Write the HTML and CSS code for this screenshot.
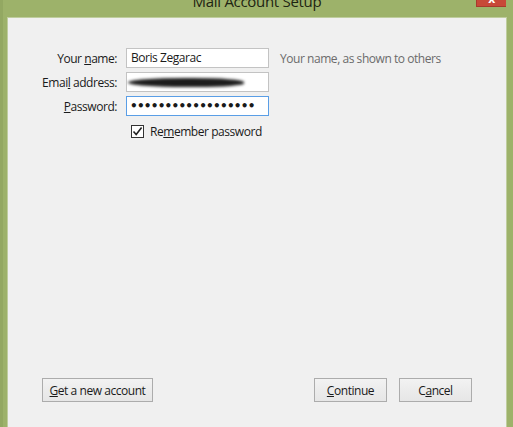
FILE: index.html
```html
<!DOCTYPE html>
<html>
<head>
<meta charset="utf-8">
<link rel="stylesheet" href="styles.css">
</head>
<body>
<div class="window">
  <div class="titlebar">
    <div></div>
    <div class="title">Mail Account Setup</div>
    <div class="close"><span class="close-x">x</span></div>
  </div>
  <div class="panel">
    <div class="form">
      <div class="label">Your <u>n</u>ame:</div>
      <div class="field">Boris Zegarac</div>
      <div class="hint">Your name, as shown to others</div>

      <div class="label">Emai<u>l</u> address:</div>
      <div class="field"><span class="redact"></span></div>
      <div></div>

      <div class="label"><u>P</u>assword:</div>
      <div class="field focused"><span class="dots">••••••••••••••••••</span></div>
      <div></div>

      <div></div>
      <div class="remember">
        <span class="check"><svg width="11" height="11" viewBox="0 0 11 11"><path d="M1.5 5.5 L4.2 8.6 L9.6 1.6" fill="none" stroke="#222" stroke-width="1.6"/></svg></span>
        <span>Re<u>m</u>ember password</span>
      </div>
      <div></div>
    </div>

    <div class="footer">
      <button class="btn wide"><u>G</u>et a new account</button>
      <div class="spacer"></div>
      <button class="btn"><u>C</u>ontinue</button>
      <button class="btn">C<u>a</u>ncel</button>
    </div>
  </div>
</div>
</body>
</html>
```

FILE: styles.css
```css
* { box-sizing: border-box; }
html, body { margin: 0; padding: 0; }
body {
  width: 513px;
  height: 427px;
  overflow: hidden;
  font-family: "Open Sans", "Noto Sans", sans-serif;
  font-size: 12px;
  letter-spacing: -0.45px;
  color: #1a1a1a;
}
.window {
  height: 427px;
  background: #9db26a;
  padding: 0 7px 0 5px;
  display: flex;
  flex-direction: column;
  border-left: 3px solid #93a862;
}
.titlebar {
  height: 18px;
  flex: none;
  display: grid;
  grid-template-columns: 1fr auto 1fr;
  overflow: hidden;
}
.title {
  font-size: 15px;
  line-height: 20px;
  margin-top: -9px;
  color: #1e2412;
  letter-spacing: -0.3px;
}
.close {
  justify-self: end;
  width: 31px;
  height: 7px;
  background: #c84838;
  margin-right: -1px;
  border: 1px solid #a8392c;
  border-top: none;
  display: flex;
  justify-content: center;
  overflow: hidden;
}
.close-x {
  color: #fff;
  font-weight: bold;
  font-size: 12px;
  line-height: 12px;
  margin-top: -7px;
}
.panel {
  flex: 1;
  background: #f0f0f0;
  display: flex;
  flex-direction: column;
  box-shadow: 0 0 0 1px rgba(255,255,255,0.35);
}
.form {
  display: grid;
  grid-template-columns: 109px 143px auto;
  column-gap: 9px;
  row-gap: 4px;
  margin-top: 30px;
  align-items: center;
}
.label {
  text-align: right;
  white-space: nowrap;
}
.field {
  height: 20px;
  background: #fff;
  border: 1px solid #c3c3c3;
  padding: 0 4px;
  line-height: 18px;
  display: flex;
  align-items: center;
  white-space: nowrap;
  overflow: hidden;
}
.field.focused { border-color: #5a9ee6; }
.hint {
  color: #6b6b6b;
  padding-left: 2px;
}
.redact {
  display: block;
  width: 116px;
  height: 9px;
  margin-left: -3px;
  background: #1c1c1c;
  border-radius: 50% 45% 40% 50%;
  filter: blur(1.4px);
}
.dots {
  font-size: 12px;
  letter-spacing: -0.75px;
  font-family: "DejaVu Sans", sans-serif;
  font-weight: bold;
  margin-left: -1px;
}
.remember {
  display: flex;
  align-items: center;
  gap: 6px;
  margin-top: 3px;
  padding-left: 5px;
  white-space: nowrap;
}
.check {
  width: 13px;
  height: 13px;
  border: 1px solid #333;
  background: #fff;
  display: flex;
  align-items: center;
  justify-content: center;
}
.footer {
  margin-top: auto;
  margin-bottom: 25px;
  display: flex;
  align-items: center;
  gap: 12px;
  padding: 0 34px 0 34px;
}
.spacer { flex: 1; }
.btn {
  font-family: inherit;
  font-size: 12px;
  letter-spacing: -0.45px;
  color: #1a1a1a;
  height: 24px;
  min-width: 73px;
  padding: 0 4px;
  border: 1px solid #acacac;
  background: linear-gradient(#f2f2f2, #e6e6e6);
  margin: 0;
  white-space: nowrap;
}
.btn.wide { width: 111px; }
```
